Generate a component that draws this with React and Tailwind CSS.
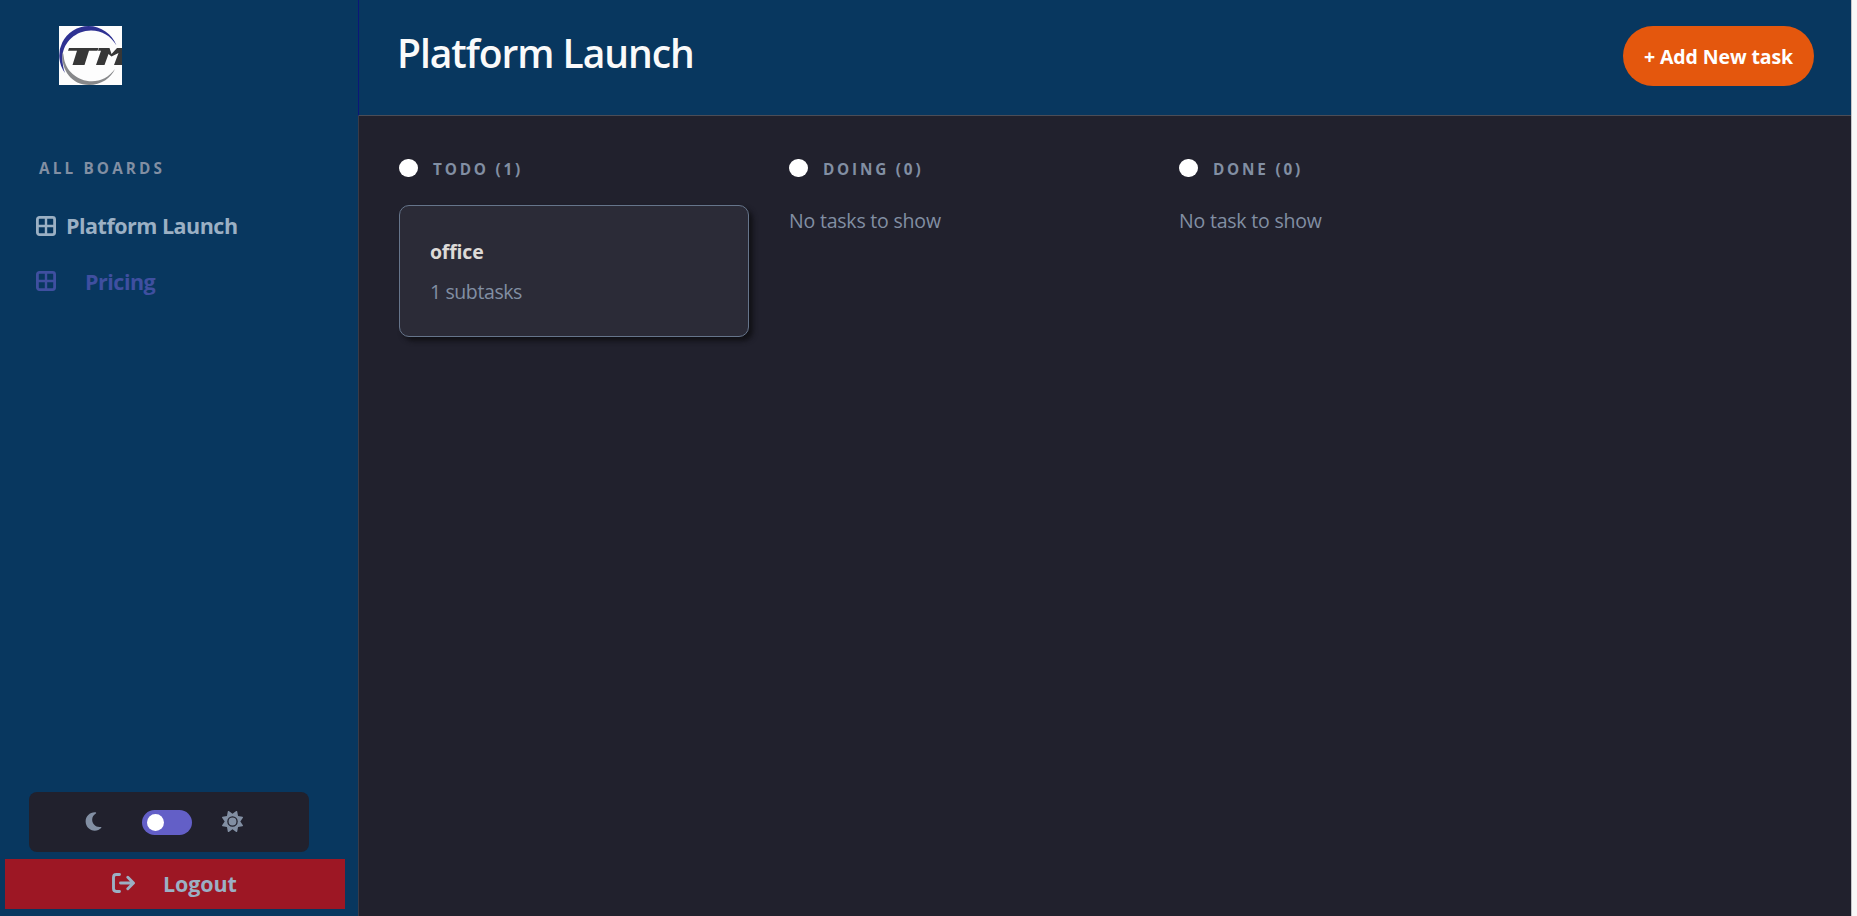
import { FaMoon, FaSun } from "react-icons/fa6";

function BoardIcon() {
  return (
    <svg className="block size-5 shrink-0" viewBox="0 0 20 20" fill="none" stroke="currentColor">
      <rect x="1.4" y="1.4" width="17.2" height="17.2" rx="2" strokeWidth="2.8" />
      <path d="M10 2v16M2 10h16" strokeWidth="2.4" />
    </svg>
  );
}

function Logo() {
  return (
    <svg className="block h-[59px] w-[63px]" viewBox="0 0 63 59">
      <rect width="63" height="59" fill="#fdfdfd" />
      <path d="M6 47A29.5 29.5 0 0 1 29.500 0C42 0 53 8 57.500 19.500C52 10 43 4.500 32 4.500C17 4.500 4.500 16 3.500 30C3.200 36 4 42 6 47Z" fill="#2e3192" />
      <path d="M3.600 26C1.500 44 13 59 30 59C42 59 52 52 56 43C50 51 42 55.300 33 55.300C18 55.300 6 44 4.800 31Q4.500 28 3.600 26Z" fill="#87888a" />
      <path d="M10 22H39.500L38.500 24.800H30L25.500 39H13.500L18 24.800H9ZM40 22H50.500L52.500 28 58 22H63V39H55L59.500 27 52.500 30.500 49.500 28 45.500 39H37L42 24.800H39Z" fill="#373737" />
    </svg>
  );
}

function Column({ title, children }) {
  return (
    <section className="w-[350px]">
      <div className="flex h-[18px] items-center gap-[15px]">
        <span className="h-[18px] w-[19px] shrink-0 rounded-full bg-white" />
        <h2 className="whitespace-nowrap pt-px text-[15.3px] font-bold leading-[18px] tracking-[2.8px] text-[#828fa3]">{title}</h2>
      </div>
      {children}
    </section>
  );
}

function Empty({ children }) {
  return <p className="mt-[30px] text-[19.5px] leading-7 tracking-[-0.2px] text-[#828fa3]">{children}</p>;
}

export default function App() {
  return (
    <div className="flex h-[916px] w-full overflow-hidden bg-[#f8f8f8] font-['Open_Sans','Noto_Sans',sans-serif]">
      <aside className="flex w-[358px] shrink-0 flex-col bg-[#08375f]">
        <div className="pl-[59px] pt-[26px]"><Logo /></div>
        <h2 className="ml-[39px] mt-[73px] text-[15.3px] font-bold leading-5 tracking-[3.15px] text-[#828fa3]">ALL BOARDS</h2>
        <nav className="mt-[34px] pl-9 text-[21.5px] font-bold leading-7 tracking-[-0.5px]">
          <div className="flex h-7 items-center gap-[10px] text-[#9bb0c4]"><BoardIcon /><span>Platform Launch</span></div>
          <div className="mt-[27px] flex h-7 items-center gap-[29px] text-[#3f4fa0]"><BoardIcon /><span className="pt-0.5">Pricing</span></div>
        </nav>
        <div className="mb-[7px] ml-[29px] mt-auto flex h-[60px] w-[280px] items-center rounded-lg bg-[#21212d] pl-[54px] text-[#828fa3]">
          <FaMoon className="mb-0.5 size-[21px]" />
          <div className="ml-[38px] flex h-[25px] w-[50px] items-center rounded-full bg-[#635fc7] pl-[5px]">
            <span className="size-[17px] rounded-full bg-white" />
          </div>
          <FaSun className="mb-0.5 ml-[30px] size-[21px]" />
        </div>
        <button className="mb-[7px] ml-[5px] flex h-[50px] w-[340px] items-center bg-[#9d1724] pl-[107px] text-[21.5px] font-bold tracking-[-0.1px] text-[#9bb0c4]">
          <svg className="mb-0.5 block h-5 w-[23px]" viewBox="0 0 23 20" fill="none" stroke="currentColor" strokeWidth="2.9" strokeLinecap="round" strokeLinejoin="round">
            <path d="M7.500 1.500H4.300Q1.500 1.500 1.500 4.400V15.600Q1.500 18.500 4.300 18.500H7.500M8.500 10H21M15.800 4.200L21.500 10L15.800 15.800" />
          </svg>
          <span className="ml-7">Logout</span>
        </button>
      </aside>
      <main className="flex w-[1493px] shrink-0 flex-col bg-[#21212d]">
        <header className="flex h-[116px] shrink-0 items-start justify-between border-b border-l border-b-[#4b4d57] border-l-[#0b1678] bg-[#08375f] pl-[38px] pr-[37px] pt-[26px]">
          <h1 className="text-[39px] font-semibold leading-[53px] tracking-[-1.05px] text-[#fafafa]">Platform Launch</h1>
          <button className="flex h-[60px] w-[191px] items-center justify-center rounded-full bg-[#e4570d] pt-0.5 text-[19.5px] font-bold tracking-[-0.1px] text-white"><span className="whitespace-nowrap">+ Add New task</span></button>
        </header>
        <div className="flex flex-1 gap-10 border-l border-[#3a3a46] pl-10 pt-[43px]">
          <Column title="TODO (1)">
            <article className="mt-7 h-[132px] rounded-[10px] border border-[#66758b] bg-[#2b2b37] pl-[30px] pt-8 shadow-[4px_4px_5px_#111116]">
              <h3 className="text-[19.5px] font-bold leading-7 tracking-[-0.2px] text-[#dddad7]">office</h3>
              <p className="mt-3 text-[19.5px] leading-7 tracking-[-0.4px] text-[#828fa3]">1 subtasks</p>
            </article>
          </Column>
          <Column title="DOING (0)"><Empty>No tasks to show</Empty></Column>
          <Column title="DONE (0)"><Empty>No task to show</Empty></Column>
        </div>
      </main>
      <div className="flex-1 border-l border-[#c4c4c8] bg-[#f8f8f8]" />
    </div>
  );
}
